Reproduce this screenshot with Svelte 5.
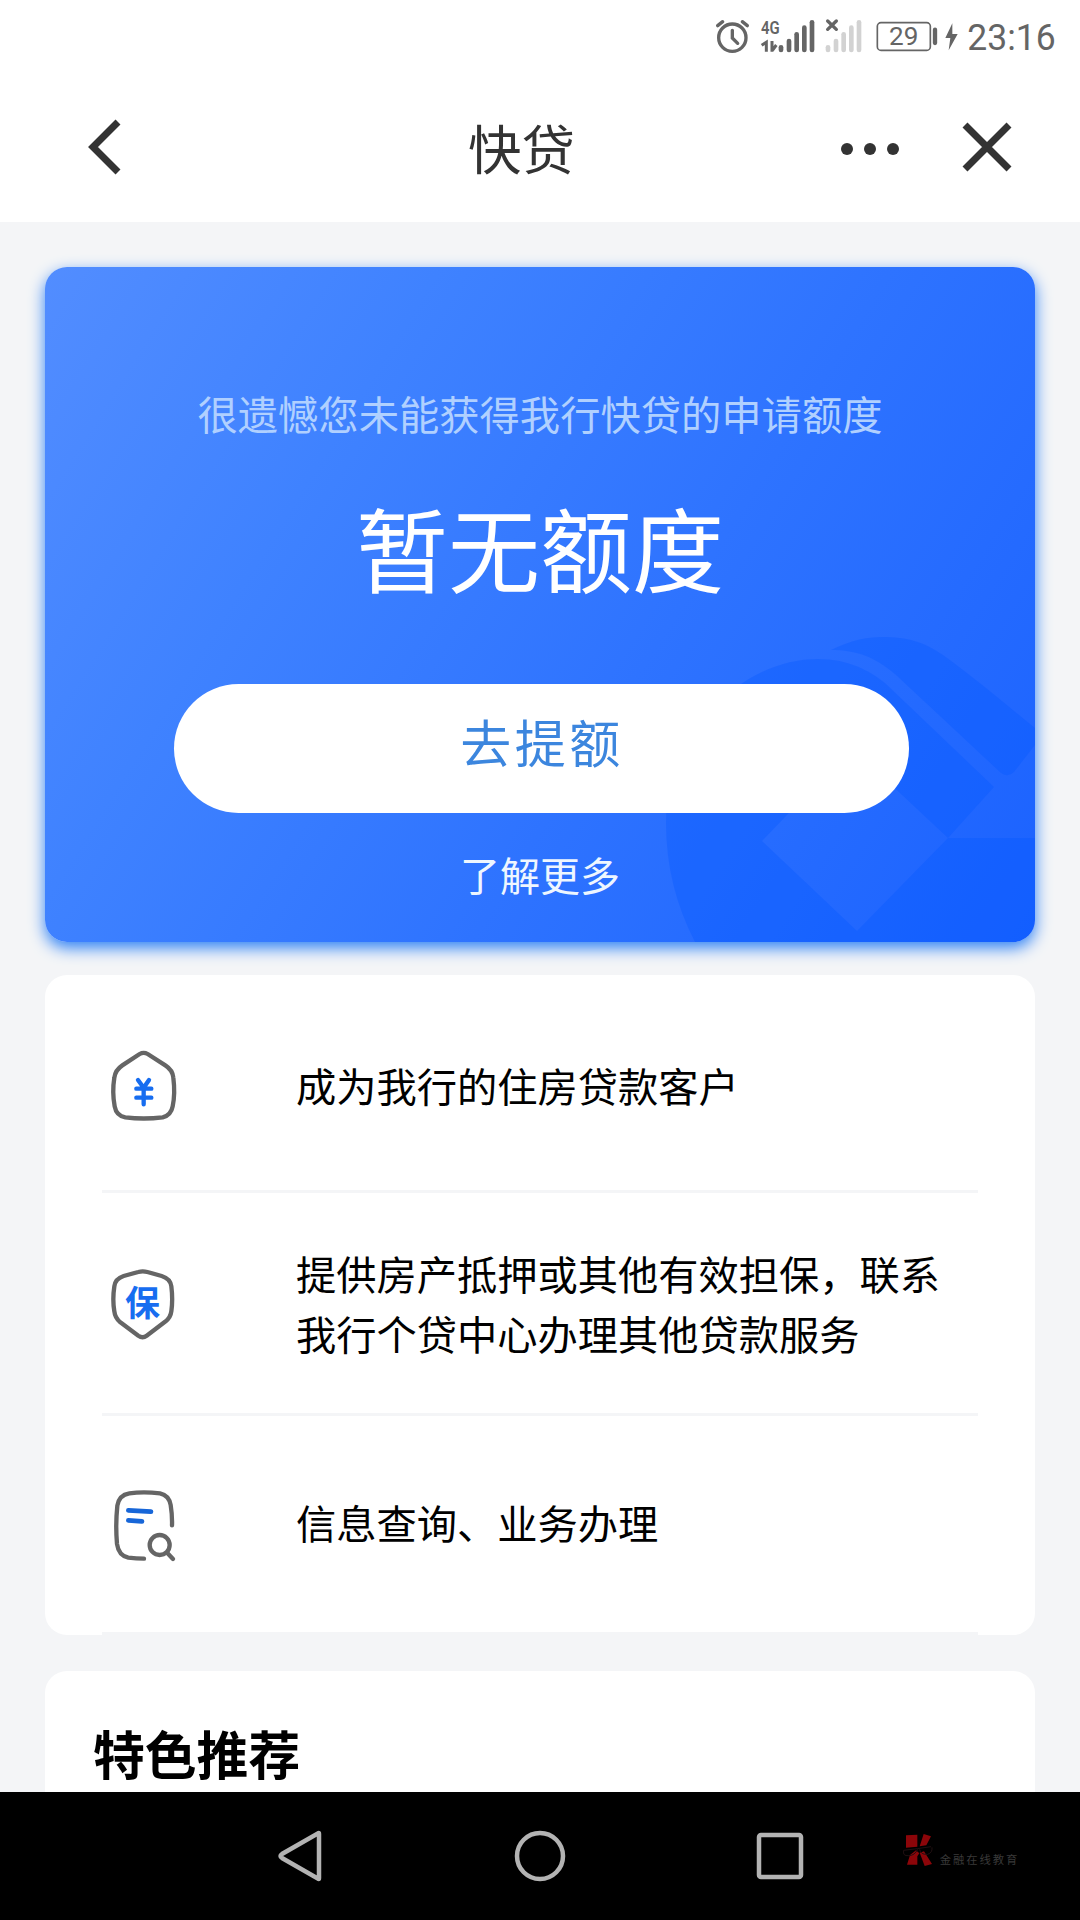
<script>
  const services = [
    { icon: 'house', lines: ['成为我行的住房贷款客户'] },
    { icon: 'shield', lines: ['提供房产抵押或其他有效担保，联系', '我行个贷中心办理其他贷款服务'] },
    { icon: 'search', lines: ['信息查询、业务办理'] }
  ];
  const bars = [
    { x: 243, y: 137 },
    { x: 267, y: 118 },
    { x: 290, y: 98 },
    { x: 313, y: 78 },
    { x: 336, y: 62 }
  ];
</script>

<div class="screen">
  <div class="status">
    <svg width="380" height="74" viewBox="0 0 1140 222">
      <g fill="none" stroke="#656565" stroke-linecap="round">
        <circle cx="97" cy="113" r="41" stroke-width="10" />
        <path d="M97 91V114L113 130" stroke-width="10" />
        <path d="M53 77L68 65M142 77L127 65" stroke-width="10" />
        <path d="M383 63L409 88M409 63L383 88" stroke-width="10" />
        <path d="M185 136L199 127V155M216 123V155M229 135L218 150" stroke-width="9" stroke-linecap="butt" />
        <rect x="532" y="68" width="159" height="83" rx="11" stroke-width="5" />
        <path d="M705 89V129" stroke-width="13" />
      </g>
      <text class="net" x="183" y="101" textLength="56" lengthAdjust="spacingAndGlyphs">4G</text>
      {#each bars as b}
        <path d="M{b.x} {b.y + 5}V150" stroke="#656565" stroke-width="14" stroke-linecap="round" />
        <path d="M{b.x + 141} {b.y + 5}V150" stroke="#d2d2d2" stroke-width="14" stroke-linecap="round" />
      {/each}
      <text class="level" x="567" y="136" textLength="88" lengthAdjust="spacingAndGlyphs">29</text>
      <path d="M757 70L736 114H751L746 151L773 102H757Z" fill="#656565" />
      <text class="clock" x="802" y="150" textLength="265" lengthAdjust="spacingAndGlyphs">23:16</text>
    </svg>
  </div>

  <header>
    <svg class="back" width="42" height="64" viewBox="0 0 42 64" fill="none" stroke="#333" stroke-width="7">
      <path d="M36 7L11 32L36 57" />
    </svg>
    <h1>快贷</h1>
    <div class="actions">
      <svg width="64" height="20" viewBox="0 0 64 20" fill="#333">
        <circle cx="9" cy="12" r="6" /><circle cx="32" cy="12" r="6" /><circle cx="55" cy="12" r="6" />
      </svg>
      <svg width="56" height="56" viewBox="0 0 56 56" stroke="#333" stroke-width="7">
        <path d="M6 6L50 50M50 6L6 50" />
      </svg>
    </div>
  </header>

  <main>
    <section class="quota">
      <svg class="emblem" width="990" height="675" viewBox="45 267 990 675" fill="#0057ff" fill-opacity=".3">
        <path fill-rule="evenodd" d="M695 942C676 905 666 866 666 823C666 735 740 659 818 659C849 659 870 671 885 683L994 787L948 838H1035V942ZM762 841L835 765H870L948 838L857 931Z" />
        <path d="M831 650C852 640 866 637 882 637C908 637 924 642 943 655C979 681 1005 704 1035 728V745L1014 772Q1008 778 1001 773L896 675C875 657 857 650 831 650Z" />
      </svg>
      <p class="notice">很遗憾您未能获得我行快贷的申请额度</p>
      <p class="amount">暂无额度</p>
      <button>去提额</button>
      <p class="more">了解更多</p>
    </section>

    <section class="services">
      {#each services as s}
        <div class="row {s.icon}">
          {#if s.icon === 'house'}
            <svg width="120" height="120" viewBox="0 0 360 360" fill="none" stroke-linecap="round" stroke-linejoin="round">
              <path d="M149 99Q161 92 173 99L226 133Q248 147 250 170Q256 218 248 256Q243 283 218 289Q161 296 106 289Q79 284 74 256Q66 214 73 170Q76 147 97 133Z" stroke="#656565" stroke-width="13" />
              <path d="M144 177L161 200L177 177M139 203H184M139 230H184M161 201V250" stroke="#176df0" stroke-width="13" />
            </svg>
          {:else if s.icon === 'shield'}
            <svg width="120" height="110" viewBox="0 0 360 330" fill="none" stroke-linejoin="round">
              <path d="M145 66Q158 62 172 66L215 78Q241 86 244 109Q249 149 244 184Q242 202 227 214L170 257Q158 266 145 257L91 217Q75 204 73 184Q67 149 73 109Q76 86 101 78Z" stroke="#656565" stroke-width="13" />
              <text class="guard" x="105" y="197">保</text>
            </svg>
          {:else}
            <svg width="120" height="110" viewBox="0 0 360 330" fill="none" stroke-linecap="round">
              <path d="M246 166Q247 136 242 105Q237 76 210 70Q160 64 118 70Q87 75 82 107Q76 166 81 222Q86 257 115 263Q139 266 162 266" stroke="#656565" stroke-width="13" />
              <circle cx="209" cy="225" r="30" stroke="#656565" stroke-width="13" />
              <path d="M232 249L249 267" stroke="#656565" stroke-width="13" />
              <path d="M115 121L183 125M115 151L156 154" stroke="#1766d8" stroke-width="14" />
            </svg>
          {/if}
          <p>{#each s.lines as line}<span>{line}</span>{/each}</p>
        </div>
      {/each}
    </section>

    <section class="featured">
      <h2>特色推荐</h2>
    </section>
  </main>

  <nav>
    <svg width="60" height="60" viewBox="0 0 60 60"><path d="M46 8V52Q46 54 44 52L9 32Q6 30 9 28L44 8Q46 6 46 8Z" /></svg>
    <svg width="60" height="60" viewBox="0 0 60 60"><circle cx="30" cy="30" r="23" /></svg>
    <svg width="60" height="60" viewBox="0 0 60 60"><rect x="9" y="9" width="42" height="42" rx="2" /></svg>
    <svg class="mark" width="160" height="60" viewBox="0 0 480 180">
      <path d="M78 46L112 44V80L78 83ZM131 42L153 49L139 76L119 79ZM81 134L90 105L108 91L118 100L112 109V134ZM119 98L132 94L156 132L134 138Z" fill="#8c0509" />
      <path d="M71 91Q67 109 86 107Q104 107 113 88M119 88Q122 105 143 103Q158 98 156 82M71 91L112 86L153 80" fill="none" stroke="#211012" stroke-width="3" />
      <text x="179" y="133" textLength="233">金融在线教育</text>
    </svg>
  </nav>
</div>

<style>
  :global(body) { margin: 0; }
  .screen {
    width: 1080px; height: 1920px; overflow: hidden;
    display: flex; flex-direction: column;
    background: #f4f5f7; color: #000;
    font-family: "Noto Sans CJK SC", sans-serif;
  }
  p, h1, h2 { margin: 0; }
  svg { display: block; flex: none; }
  .status { height: 74px; background: #fff; display: flex; justify-content: flex-end; }
  .status text { fill: #656565; font-family: Roboto, sans-serif; }
  .net { font-size: 57px; font-weight: 600; }
  .level { font-size: 77px; }
  .clock { font-size: 108px; }
  header {
    height: 148px; box-sizing: border-box; background: #fff; padding: 0 65px 2px 82px;
    display: grid; grid-template-columns: 386px 1fr auto; align-items: center;
  }
  header h1 { font-size: 53.5px; line-height: 72px; font-weight: 400; color: #333; margin-bottom: 1px; }
  .actions { display: flex; align-items: center; gap: 57px; }
  main {
    height: 1570px; box-sizing: border-box; overflow: hidden;
    padding: 45px 45px 0; display: flex; flex-direction: column;
  }
  .quota {
    position: relative; flex: none; height: 675px; border-radius: 22px;
    background: linear-gradient(122deg, #528dff 0%, #3f82ff 28%, #2e73ff 60%, #1b62ff 100%);
    box-shadow: 0 6px 16px #2f82f5;
    display: flex; flex-direction: column; align-items: center; color: #fff;
  }
  .emblem { position: absolute; inset: 0; border-radius: 22px; }
  .quota p, .quota button { position: relative; }
  .notice { margin-top: 116px; font-size: 40.3px; line-height: 60px; color: #b0d0ff; white-space: nowrap; }
  .amount { margin-top: 35px; font-size: 92px; line-height: 136px; }
  button {
    margin: 70px 0 0 2px; width: 735px; height: 129px; padding: 0 0 15px 2px; border: 0; border-radius: 65px;
    background: #fff; color: #3c86de; font: 400 51px/1 "Noto Sans CJK SC", sans-serif; letter-spacing: 3.5px;
  }
  .more { margin-top: 31px; font-size: 40px; line-height: 60px; color: #eef6ff; }
  .services {
    flex: none; margin-top: 33px; height: 660px; box-sizing: border-box;
    border-radius: 22px; background: #fff; padding: 0 57px;
  }
  .row {
    height: 218px; box-sizing: border-box; border-bottom: 3px solid #f4f5f7;
    display: flex; align-items: center;
  }
  .row svg { margin-left: -12px; }
  .row p { margin-left: 86px; font-size: 40.25px; line-height: 60px; white-space: nowrap; }
  .row span { display: block; }
  .row.house { padding-top: 4px; }
  .row.house svg { margin-bottom: 8px; }
  .row.shield { height: 223px; }
  .row.shield svg { margin-top: 4px; }
  .row.search { height: 219px; }
  .row.search p { margin-bottom: 4px; }
  .row.search svg { margin-top: 2px; }
  .guard { font: 700 105px "Noto Sans CJK SC", sans-serif; fill: #176df0; }
  .featured {
    flex: none; margin-top: 36px; height: 240px; border-radius: 22px 22px 0 0;
    background: #fff; padding: 44px 48px 0;
  }
  h2 { font-size: 51.8px; line-height: 76px; font-weight: 700; }
  nav {
    height: 128px; flex: none; box-sizing: border-box; background: #000; padding: 0 40px 0 273px;
    display: grid; grid-template-columns: 237px 240px 130px 160px; align-items: center;
  }
  nav svg { fill: none; stroke: #b3b3b3; stroke-width: 4.5; }
  nav .mark { stroke: none; margin-bottom: 12px; }
  .mark text { font-size: 34px; fill: #393939; }
</style>
